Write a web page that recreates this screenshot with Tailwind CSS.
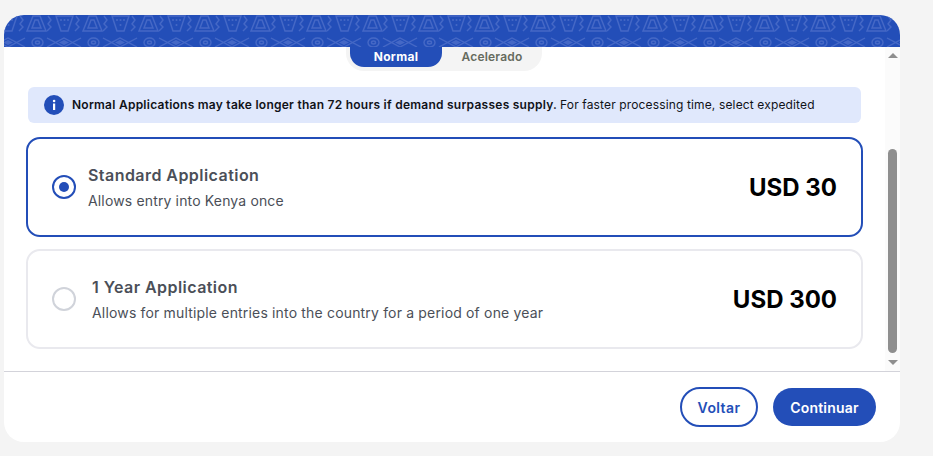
<!DOCTYPE html>
<html lang="en">
<head>
    <meta charset="UTF-8" />
    <title>Visa application type</title>
    <script src="https://cdn.jsdelivr.net/npm/@tailwindcss/browser@4"></script>
</head>
<body class="h-[456px] overflow-hidden bg-[#f4f4f4] font-['Inter',sans-serif]">
    <div class="pt-[15px] pl-1 w-[900px]">
        <section class="flex flex-col h-[427px] bg-white rounded-[20px] overflow-hidden">
            <!-- Banner with the woven pattern -->
            <svg class="block w-full h-8 shrink-0" width="896" height="32">
                <defs>
                    <pattern id="weave" x="-4" y="0" width="56" height="32" patternUnits="userSpaceOnUse">
                        <g fill="none" stroke="#4568c6" stroke-width="1.4">
                            <!-- top row: peak, wiggle, cup, wiggle -->
                            <path d="M27 16 L33 1 H40 L46 16 Z" />
                            <path d="M32 13 L35 5 H38 L41 13 Z" />
                            <path d="M48 1 L51 5 L48 9 L51 12 L47 16" />
                            <path d="M0 1 H17 L12 16 H5 Z" />
                            <path d="M56 1 H73 L68 16 H61 Z" />
                            <path d="M20 1 L23 5 L20 9 L23 12 L19 16" />
                            <!-- bottom row: ring, crossed lens -->
                            <ellipse cx="37.5" cy="27.5" rx="5.5" ry="4.5" />
                            <ellipse cx="37.5" cy="27.5" rx="2" ry="1.5" />
                            <path d="M-9 23 L8 32 L25 23" />
                            <path d="M-9 32 L8 23 L25 32" />
                            <path d="M47 23 L64 32 L81 23" />
                            <path d="M47 32 L64 23 L81 32" />
                        </g>
                        <g fill="#4568c6">
                            <circle cx="5" cy="5" r="1" />
                            <circle cx="8.5" cy="5" r="1" />
                            <circle cx="12" cy="5" r="1" />
                            <circle cx="8.5" cy="10" r="1" />
                            <path d="M3 27.5 L8 25 L13 27.5 L8 30 Z" />
                            <path d="M59 27.5 L64 25 L69 27.5 L64 30 Z" />
                        </g>
                    </pattern>
                </defs>
                <rect width="896" height="32" fill="#234eb8" />
                <rect width="896" height="32" fill="url(#weave)" />
            </svg>

            <!-- Scrolling body -->
            <div class="flex flex-1 min-h-0 h-[324px]">
                <div class="flex-1 min-w-0">
                    <div class="flex justify-center pr-[1px] h-[24px]">
                        <div class="flex w-[196px] h-[24px] px-1 rounded-b-[18px] bg-[#f4f4f4]">
                            <div class="w-[92px] h-5 rounded-b-[14px] bg-[#234eb8] text-white text-[12px] font-bold tracking-[0.3px] flex items-center justify-center">Normal</div>
                            <div class="flex-1 h-5 pl-1 text-[#666b5e] text-[12px] font-semibold tracking-[0.2px] flex items-center justify-center">Acelerado</div>
                        </div>
                    </div>

                    <div class="mt-4 ml-6 w-[833px] h-9 rounded-md bg-[#e0e8fc] flex items-center pl-4 text-[12px] text-[#101218]">
                        <svg class="mr-2 shrink-0" width="20" height="20" viewBox="0 0 20 20">
                            <circle cx="10" cy="10" r="10" fill="#234eb8" />
                            <rect x="9" y="8.5" width="2.2" height="6.5" fill="#fff" />
                            <circle cx="10.1" cy="6" r="1.3" fill="#fff" />
                        </svg>
                        <span class="font-semibold tracking-[0.25px] mr-[3px]">Normal Applications may take longer than 72 hours if demand surpasses supply.</span>
                        <span class="tracking-[0.14px]">For faster processing time, select expedited</span>
                    </div>

                    <div class="mt-[14px] ml-[22px] w-[837px] h-[100px] rounded-[14px] border-2 border-[#234eb8] flex items-center pl-6 pr-6">
                        <span class="w-6 h-6 rounded-full border-2 border-[#234eb8] flex items-center justify-center shrink-0">
                            <span class="w-[10px] h-[10px] rounded-full bg-[#234eb8]"></span>
                        </span>
                        <div class="ml-3 flex-1 -mt-[1px]">
                            <div class="text-[16px] font-semibold tracking-[0.45px] text-[#4b4f58] leading-6">Standard Application</div>
                            <div class="text-[14px] tracking-[0.15px] text-[#4b4f58] leading-5 mt-1">Allows entry into Kenya once</div>
                        </div>
                        <div class="text-[24px] font-bold text-black pt-[2px]">USD 30</div>
                    </div>

                    <div class="mt-3 ml-[22px] w-[837px] h-[100px] rounded-[14px] border-2 border-[#e9e9ee] flex items-center pl-6 pr-6">
                        <span class="w-6 h-6 rounded-full border-2 border-[#d0d3da] shrink-0"></span>
                        <div class="ml-4 flex-1 -mt-[1px]">
                            <div class="text-[16px] font-semibold tracking-[0.45px] text-[#4b4f58] leading-6">1 Year Application</div>
                            <div class="text-[14px] tracking-[0.17px] text-[#4b4f58] leading-5 mt-1">Allows for multiple entries into the country for a period of one year</div>
                        </div>
                        <div class="text-[24px] font-bold text-black pt-[2px]">USD 300</div>
                    </div>
                </div>

                <!-- Scrollbar -->
                <div class="w-[15px] shrink-0 bg-[#fbfbfb] flex flex-col items-center justify-between py-[6px] relative">
                    <svg width="10" height="5"><path d="M0 5 L5 0 L10 5 Z" fill="#8f8f8f" /></svg>
                    <div class="absolute top-[102px] left-[3px] w-[9px] h-[204px] rounded-full bg-[#8f8f8f]"></div>
                    <svg width="10" height="5"><path d="M0 0 L10 0 L5 5 Z" fill="#8f8f8f" /></svg>
                </div>
            </div>

            <!-- Footer -->
            <div class="h-[71px] shrink-0 border-t border-[#d3d3da] flex items-center justify-end gap-[15px] pr-6">
                <button class="w-[78px] h-[40px] rounded-full border-2 border-[#234eb8] text-[#234eb8] text-[14px] font-semibold tracking-[0.4px]">Voltar</button>
                <button class="w-[103px] h-[38px] rounded-full bg-[#234eb8] text-white text-[14px] font-semibold tracking-[0.2px]">Continuar</button>
            </div>
        </section>
    </div>
</body>
</html>
